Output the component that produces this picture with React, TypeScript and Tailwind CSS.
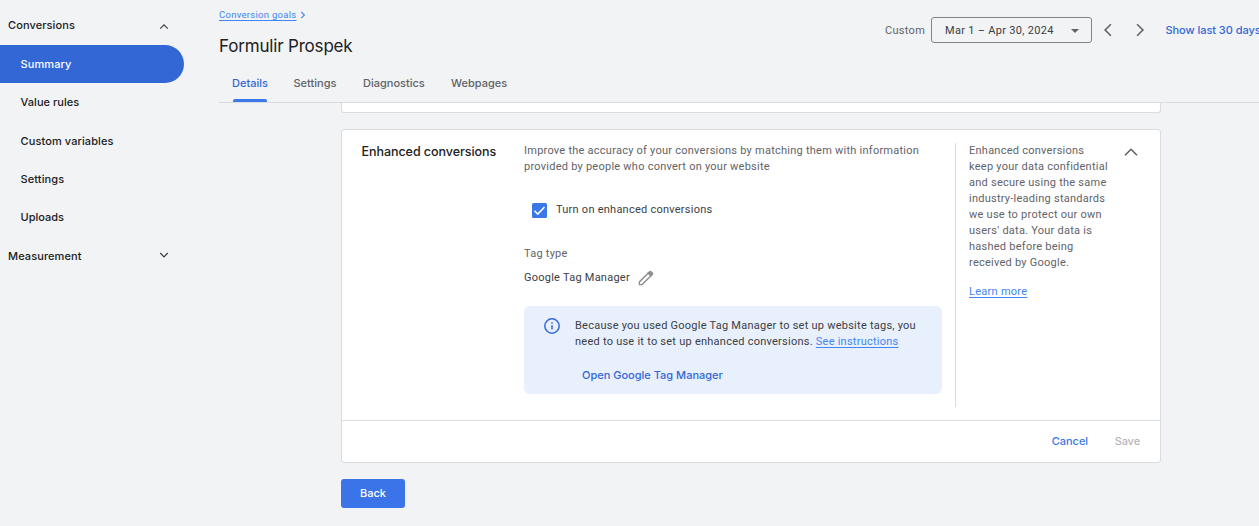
import type { ReactNode } from "react";

const NAV = [
  { label: "Summary", tracking: "tracking-[0.1px]" },
  { label: "Value rules", tracking: "tracking-[0.05px]" },
  { label: "Custom variables", tracking: "tracking-[0.1px]" },
  { label: "Settings", tracking: "tracking-[0.1px]" },
  { label: "Uploads", tracking: "" },
];
const TABS = [
  { label: "Details", width: "w-[61.5px]" },
  { label: "Settings", width: "w-[69.5px]" },
  { label: "Diagnostics", width: "w-[88px]" },
  { label: "Webpages", width: "w-[82px]" },
];
const NOTE = [
  "Enhanced conversions",
  "keep your data confidential",
  "and secure using the same",
  "industry-leading standards",
  "we use to protect our own",
  "users' data. Your data is",
  "hashed before being",
  "received by Google.",
];

function Chevron({ d, className, stroke = 1.3 }: { d: string; className: string; stroke?: number }) {
  return (
    <svg viewBox="0 0 16 16" className={className} fill="none" stroke="currentColor" strokeWidth={stroke}>
      <path d={d} />
    </svg>
  );
}

function GroupRow({ children, open }: { children: ReactNode; open: boolean }) {
  return (
    <div className="flex h-[38.4px] items-center justify-between pl-2 pr-[47px]">
      <span className="tracking-[0.1px]">{children}</span>
      <Chevron
        d={open ? "M4.2 10.6 8 6.8l3.8 3.8" : "M4.2 5 8 8.8 11.8 5"}
        className="size-4 text-[#3c4043]"
        stroke={1.2}
      />
    </div>
  );
}

function Sidebar() {
  return (
    <nav className="w-[219px] shrink-0 pt-[6.4px] text-[11px] font-medium text-[#202124]">
      <GroupRow open>Conversions</GroupRow>
      {NAV.map((item, i) => (
        <div
          key={item.label}
          className={`flex h-[38.4px] w-[184px] items-center pl-[20.5px] ${item.tracking} ${
            i === 0 ? "rounded-r-full bg-[#3367d6] text-white" : ""
          }`}
        >
          {item.label}
        </div>
      ))}
      <GroupRow open={false}>Measurement</GroupRow>
    </nav>
  );
}

function Header() {
  return (
    <header className="flex h-[103px] shrink-0 justify-between border-b border-[#dadce0]">
      <div className="flex flex-col">
        <div className="flex h-[30px] items-center text-[#4285f4]">
          <a className="font-[Roboto] text-[9.5px] tracking-[0.28px] underline underline-offset-2">Conversion goals</a>
          <Chevron d="M5.2 3 10.2 8l-5 5" className="ml-px size-[10px]" stroke={1.8} />
        </div>
        <h1 className="flex h-[34px] items-center text-[17px] tracking-[-0.18px] text-[#202124]">Formulir Prospek</h1>
        <div className="flex h-[38px] text-[11px] font-medium text-[#5f6368]">
          {TABS.map((tab, i) => (
            <div key={tab.label} className={`flex flex-col items-start pl-[13px] ${tab.width}`}>
              <div className={`flex h-[35px] items-center pt-[3px] ${i === 0 ? "text-[#3367d6]" : ""}`}>
                {tab.label}
              </div>
              {i === 0 && <div className="ml-px h-[3px] w-[34px] rounded-t-[2px] bg-[#3b78e7]" />}
            </div>
          ))}
        </div>
      </div>
      <div className="mt-[17px] flex h-[26px] w-[374px] shrink-0 items-center whitespace-nowrap font-[Roboto] text-[11px] tracking-[0.3px] text-[#5f6368]">
        <span className="w-[46px] shrink-0 pt-[2px]">Custom</span>
        <div className="flex h-[26px] w-[161px] shrink-0 items-center justify-between rounded-[3px] border border-[#80868b] pl-[13px] pr-3 text-[#3c4043]">
          <span className="pt-[2px]">Mar 1 – Apr 30, 2024</span>
          <svg viewBox="0 0 8 4" className="mt-px h-1 w-2" fill="#5f6368">
            <path d="M0 0h8L4 4z" />
          </svg>
        </div>
        <Chevron d="M10.9 2.2 5.1 8l5.8 5.8" className="ml-2 size-4 shrink-0" stroke={1.6} />
        <Chevron d="M5.1 2.2 10.9 8l-5.8 5.8" className="ml-4 size-4 shrink-0" stroke={1.6} />
        <span className="ml-[17.5px] font-[Inter] font-medium tracking-[-0.05px] text-[#3367d6]">Show last 30 days</span>
      </div>
    </header>
  );
}

function InfoBox() {
  return (
    <div className="mt-5 flex h-[88px] w-[418px] rounded-md bg-[#e8f0fe] pl-[20px] pt-3">
      <svg viewBox="0 0 16 16" className="-mt-[0.5px] size-4 shrink-0" fill="none" stroke="#3367d6" strokeWidth="1.5">
        <circle cx="8" cy="8" r="7.2" />
        <path d="M8 7.2v4.3M8 4.2v1.6" />
      </svg>
      <div className="ml-[15px] leading-4 text-[#3c4043]">
        <p className="whitespace-nowrap">
          Because you used Google Tag Manager to set up website tags, you
          <br />
          need to use it to set up enhanced conversions.{" "}
          <a className="text-[#4285f4] underline underline-offset-2">See instructions</a>
        </p>
        <div className="ml-[7px] mt-[17px] font-[Inter] font-medium tracking-[0px] text-[#3367d6]">
          Open Google Tag Manager
        </div>
      </div>
    </div>
  );
}

function EnhancedCard() {
  return (
    <section className="mt-4 h-[334px] w-[820px] rounded-[3px] border border-[#dadce0] bg-white">
      <div className="flex h-[290px]">
        <h2 className="w-[182px] shrink-0 pl-[19.5px] pt-[14px] text-[12.5px] font-medium leading-4 tracking-[-0.05px] text-[#202124]">
          Enhanced conversions
        </h2>
        <div className="w-[431px] shrink-0 whitespace-nowrap pt-[13px] font-[Roboto] text-[11px] leading-4 tracking-[0.245px] text-[#5f6368]">
          <p>
            Improve the accuracy of your conversions by matching them with information
            <br />
            provided by people who convert on your website
          </p>
          <div className="ml-2 mt-[27px] flex h-4 items-center text-[#3c4043]">
            <svg viewBox="0 0 15 15" className="size-[15px]">
              <rect width="15" height="15" rx="1.5" fill="#3b78e7" />
              <path d="m2.5 7.8 3.3 3.3 6.7-7" fill="none" stroke="white" strokeWidth="1.5" />
            </svg>
            <span className="ml-[9px]">Turn on enhanced conversions</span>
          </div>
          <div className="mt-7">Tag type</div>
          <div className="mt-2 flex h-4 items-center text-[#3c4043]">
            <span className="w-[114px]">Google Tag Manager</span>
            <svg viewBox="0 0 16 16" className="-mt-px size-4" fill="none" stroke="#8e8e8e" strokeWidth="1.4">
              <path d="M1.4 14.6v-2.7l8.9-8.9L13 5.7l-8.9 8.9z" />
              <path d="m10.3 3 1.3-1.3c.4-.4 1-.4 1.4 0L14.3 3c.4.4.4 1 0 1.4L13 5.7z" fill="#8e8e8e" />
            </svg>
          </div>
          <InfoBox />
        </div>
        <aside className="mt-[13px] flex h-[264px] flex-1 border-l border-[#dadce0] pl-[13px] font-[Roboto] text-[11px] leading-4 tracking-[0.25px] text-[#5f6368]">
          <div className="w-[153.5px] whitespace-nowrap">
            {NOTE.map((line) => (
              <div key={line}>{line}</div>
            ))}
            <a className="mt-[13px] inline-block tracking-[0.27px] text-[#4285f4] underline underline-offset-2">
              Learn more
            </a>
          </div>
          <Chevron d="M2 11.3 8 5.3l6 6" className="mt-px size-4" stroke={1.6} />
        </aside>
      </div>
      <footer className="flex h-[42px] items-center justify-end gap-[26.5px] border-t border-[#dadce0] pr-5 text-[11px] font-medium">
        <button className="text-[#3b78e7]">Cancel</button>
        <button className="tracking-[-0.1px] text-[#b4b6b9]">Save</button>
      </footer>
    </section>
  );
}

export default function App() {
  return (
    <div className="flex h-[526px] w-[1259px] overflow-hidden bg-[#f1f3f4] font-[Inter]">
      <Sidebar />
      <main className="w-[1040px] shrink-0">
        <Header />
        <div className="pl-[122px]">
          <div className="h-[10px] w-[820px] rounded-b-[3px] border border-t-0 border-[#dadce0] bg-white" />
          <EnhancedCard />
          <button className="mt-4 block h-[29px] w-16 rounded-[3px] bg-[#3b73e8] text-[11px] font-medium text-white">
            Back
          </button>
        </div>
      </main>
    </div>
  );
}
